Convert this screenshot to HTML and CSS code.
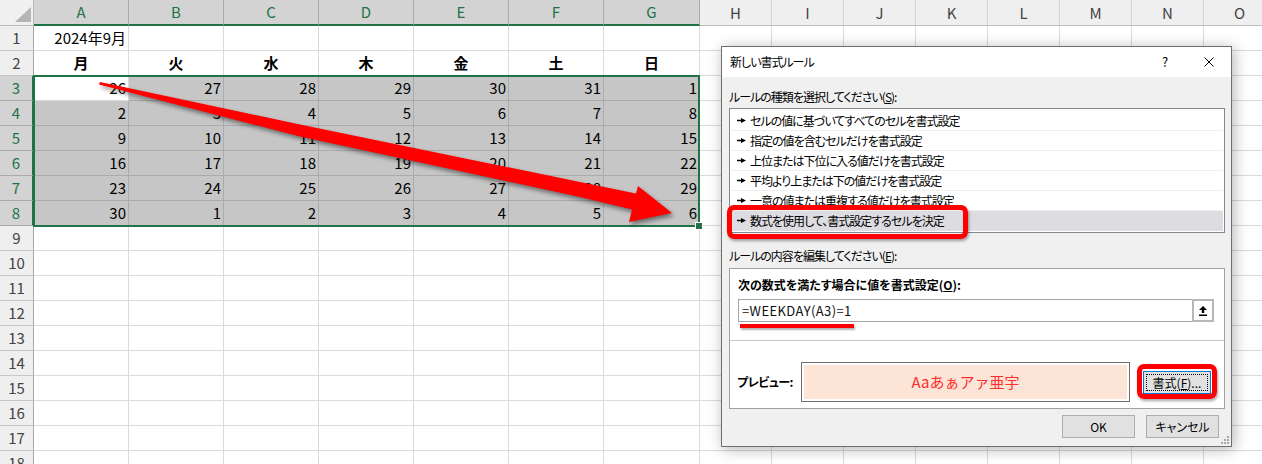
FILE: index.html
```html
<!DOCTYPE html>
<html lang="ja">
<head>
<meta charset="utf-8">
<title>新しい書式ルール</title>
<link rel="stylesheet" href="styles.css">
</head>
<body>
<div class="sheet">
  <div class="corner"><svg class="tri" viewBox="0 0 34 26"><polygon points="15,22 31,22 31,7" fill="#b5b5b5"/></svg></div>
  <div class="ch on">A</div><div class="ch on">B</div><div class="ch on">C</div><div class="ch on">D</div><div class="ch on">E</div><div class="ch on">F</div><div class="ch on">G</div>
  <div class="ch">H</div><div class="ch">I</div><div class="ch">J</div><div class="ch">K</div><div class="ch">L</div><div class="ch">M</div><div class="ch">N</div><div class="ch">O</div>

  <div class="rh">1</div><div class="v">2024年9月</div><i></i><i></i><i></i><i></i><i></i><i></i><i></i><i></i><i></i><i></i><i></i><i></i><i></i><i></i>

  <div class="rh">2</div><div class="d">月</div><div class="d">火</div><div class="d">水</div><div class="d">木</div><div class="d">金</div><div class="d">土</div><div class="d">日</div><i></i><i></i><i></i><i></i><i></i><i></i><i></i><i></i>

  <div class="rh on">3</div><div class="v">26</div><div class="v s">27</div><div class="v s">28</div><div class="v s">29</div><div class="v s">30</div><div class="v s">31</div><div class="v s">1</div><i></i><i></i><i></i><i></i><i></i><i></i><i></i><i></i>

  <div class="rh on">4</div><div class="v s">2</div><div class="v s">3</div><div class="v s">4</div><div class="v s">5</div><div class="v s">6</div><div class="v s">7</div><div class="v s">8</div><i></i><i></i><i></i><i></i><i></i><i></i><i></i><i></i>

  <div class="rh on">5</div><div class="v s">9</div><div class="v s">10</div><div class="v s">11</div><div class="v s">12</div><div class="v s">13</div><div class="v s">14</div><div class="v s">15</div><i></i><i></i><i></i><i></i><i></i><i></i><i></i><i></i>

  <div class="rh on">6</div><div class="v s">16</div><div class="v s">17</div><div class="v s">18</div><div class="v s">19</div><div class="v s">20</div><div class="v s">21</div><div class="v s">22</div><i></i><i></i><i></i><i></i><i></i><i></i><i></i><i></i>

  <div class="rh on">7</div><div class="v s">23</div><div class="v s">24</div><div class="v s">25</div><div class="v s">26</div><div class="v s">27</div><div class="v s">28</div><div class="v s">29</div><i></i><i></i><i></i><i></i><i></i><i></i><i></i><i></i>

  <div class="rh on">8</div><div class="v s">30</div><div class="v s">1</div><div class="v s">2</div><div class="v s">3</div><div class="v s">4</div><div class="v s">5</div><div class="v s">6</div><i></i><i></i><i></i><i></i><i></i><i></i><i></i><i></i>

  <div class="rh">9</div><i></i><i></i><i></i><i></i><i></i><i></i><i></i><i></i><i></i><i></i><i></i><i></i><i></i><i></i><i></i>
  <div class="rh">10</div><i></i><i></i><i></i><i></i><i></i><i></i><i></i><i></i><i></i><i></i><i></i><i></i><i></i><i></i><i></i>
  <div class="rh">11</div><i></i><i></i><i></i><i></i><i></i><i></i><i></i><i></i><i></i><i></i><i></i><i></i><i></i><i></i><i></i>
  <div class="rh">12</div><i></i><i></i><i></i><i></i><i></i><i></i><i></i><i></i><i></i><i></i><i></i><i></i><i></i><i></i><i></i>
  <div class="rh">13</div><i></i><i></i><i></i><i></i><i></i><i></i><i></i><i></i><i></i><i></i><i></i><i></i><i></i><i></i><i></i>
  <div class="rh">14</div><i></i><i></i><i></i><i></i><i></i><i></i><i></i><i></i><i></i><i></i><i></i><i></i><i></i><i></i><i></i>
  <div class="rh">15</div><i></i><i></i><i></i><i></i><i></i><i></i><i></i><i></i><i></i><i></i><i></i><i></i><i></i><i></i><i></i>
  <div class="rh">16</div><i></i><i></i><i></i><i></i><i></i><i></i><i></i><i></i><i></i><i></i><i></i><i></i><i></i><i></i><i></i>
  <div class="rh">17</div><i></i><i></i><i></i><i></i><i></i><i></i><i></i><i></i><i></i><i></i><i></i><i></i><i></i><i></i><i></i>
  <div class="rh">18</div><i></i><i></i><i></i><i></i><i></i><i></i><i></i><i></i><i></i><i></i><i></i><i></i><i></i><i></i><i></i>
</div>

<div class="selbox"></div>
<div class="handle"></div>

<svg class="arrow" viewBox="0 0 1262 464">
  <polygon class="arrow-shape" points="100,82 300,124.5 580,182 636,193.5 638,186 672,213 629,222 632,209.5 580,197 300,136.5 99,84.5"/>
</svg>

<div class="dialog">
  <div class="titlebar">
    <span class="title">新しい書式ルール</span>
    <span class="help">?</span>
    <svg class="close" viewBox="0 0 10 10"><path d="M0.5 0.5L9.5 9.5M9.5 0.5L0.5 9.5" stroke="#000" stroke-width="1" fill="none"/></svg>
  </div>
  <div class="dbody">
    <div class="label">ルールの種類を選択してください(<u>S</u>):</div>
    <ul class="list">
      <li><svg class="pt" viewBox="0 0 9 5"><path d="M0 1.8h5v1.4H0z M4 0L9 2.5 4 5z" fill="#000"/></svg><span>セルの値に基づいてすべてのセルを書式設定</span></li>
      <li><svg class="pt" viewBox="0 0 9 5"><path d="M0 1.8h5v1.4H0z M4 0L9 2.5 4 5z" fill="#000"/></svg><span>指定の値を含むセルだけを書式設定</span></li>
      <li><svg class="pt" viewBox="0 0 9 5"><path d="M0 1.8h5v1.4H0z M4 0L9 2.5 4 5z" fill="#000"/></svg><span>上位または下位に入る値だけを書式設定</span></li>
      <li><svg class="pt" viewBox="0 0 9 5"><path d="M0 1.8h5v1.4H0z M4 0L9 2.5 4 5z" fill="#000"/></svg><span>平均より上または下の値だけを書式設定</span></li>
      <li><svg class="pt" viewBox="0 0 9 5"><path d="M0 1.8h5v1.4H0z M4 0L9 2.5 4 5z" fill="#000"/></svg><span>一意の値または重複する値だけを書式設定</span></li>
      <li class="cur"><svg class="pt" viewBox="0 0 9 5"><path d="M0 1.8h5v1.4H0z M4 0L9 2.5 4 5z" fill="#000"/></svg><span>数式を使用して、書式設定するセルを決定</span></li>
    </ul>
    <div class="label l2">ルールの内容を編集してください(<u>E</u>):</div>
    <div class="panel">
      <div class="psec">
        <div class="blabel">次の数式を満たす場合に値を書式設定(<u>O</u>):</div>
        <div class="input">
          <span class="ftext">=WEEKDAY(A3)=1</span>
          <span class="refbtn"><svg class="refic" viewBox="0 0 8 10"><path d="M4 0L8 4H5.2V7H2.8V4H0Z M0 8.5H8V10H0Z" fill="#000"/></svg></span>
        </div>
      </div>
      <div class="prow">
        <span class="plabel">プレビュー:</span>
        <div class="preview"><div class="pinner">Aaあぁアァ亜宇</div></div>
        <button class="btn fmt"><span class="focus">書式(<u>F</u>)...</span></button>
      </div>
    </div>
    <div class="actions">
      <button class="btn">OK</button>
      <button class="btn">キャンセル</button>
    </div>
  </div>
  <svg class="grip" viewBox="0 0 10 10"><g fill="#a8a8a8"><rect x="8" y="2" width="2" height="2"/><rect x="8" y="5" width="2" height="2"/><rect x="5" y="5" width="2" height="2"/><rect x="8" y="8" width="2" height="2"/><rect x="5" y="8" width="2" height="2"/><rect x="2" y="8" width="2" height="2"/></g></svg>
  <div class="mark m1"></div>
  <div class="mark m2"></div>
  <div class="uline"></div>
</div>
</body>
</html>
```
FILE: styles.css
```css
* { box-sizing: border-box; margin: 0; padding: 0; }
html, body { width: 1262px; height: 464px; overflow: hidden; background: #fff; }
body {
  position: relative;
  font-family: "Noto Sans CJK JP", "Noto Sans", sans-serif;
  color: #000;
}

/* ---------- spreadsheet ---------- */
.sheet {
  display: grid;
  grid-template-columns: 34px repeat(6, 95px) 96px repeat(8, 72px);
  grid-template-rows: 26px repeat(18, 25px);
  width: 1262px;
  height: 464px;
  overflow: hidden;
  font-size: 15px;
  line-height: 24px;
}
.sheet > * {
  border-right: 1px solid #dadada;
  border-bottom: 1px solid #dadada;
  white-space: nowrap;
  overflow: hidden;
}
.sheet i { display: block; }

.corner {
  background: #f0f0f0;
  border-right-color: #bcbcbc !important;
  border-bottom-color: #bcbcbc !important;
}
.tri { display: block; width: 34px; height: 26px; }

.ch {
  background: #efefef;
  color: #444;
  text-align: center;
  line-height: 25px;
  border-right-color: #d4d4d4 !important;
  border-bottom-color: #bdbdbd !important;
}
.ch.on {
  background: #d3d3d3;
  color: #217346;
  line-height: 24px;
  border-right-color: #ababab !important;
  border-bottom: 2px solid #217346 !important;
}

.rh {
  background: #efefef;
  color: #444;
  text-align: center;
  border-right-color: #a6a6a6 !important;
  border-bottom-color: #c6c6c6 !important;
}
.rh.on {
  background: #d3d3d3;
  color: #217346;
  border-right: 2px solid #217346 !important;
  border-bottom-color: #ababab !important;
}

.v { text-align: right; padding-right: 2px; }
.d { text-align: center; font-weight: bold; }
.s {
  background: #c6c6c6;
  border-right-color: #ababab !important;
  border-bottom-color: #ababab !important;
}

.selbox {
  position: absolute;
  left: 33px;
  top: 75px;
  width: 667px;
  height: 152px;
  border: 2px solid #217346;
}
.handle {
  position: absolute;
  left: 695px;
  top: 222px;
  width: 8px;
  height: 8px;
  background: #217346;
  border: 1px solid #fff;
}

.arrow {
  position: absolute;
  left: 0;
  top: 0;
  width: 1262px;
  height: 464px;
  pointer-events: none;
}
.arrow-shape {
  fill: #ff0000;
  filter: drop-shadow(2px 3px 2px rgba(0, 0, 0, 0.45));
}

/* ---------- dialog ---------- */
.dialog {
  position: absolute;
  left: 721px;
  top: 46px;
  width: 511px;
  border: 1px solid #6f6f6f;
  background: #f0f0f0;
  box-shadow: 2px 2px 14px rgba(0, 0, 0, 0.3);
  font-size: 12px;
  line-height: 16px;
  font-feature-settings: "palt";
}
.titlebar {
  height: 30px;
  background: #fff;
  display: flex;
  align-items: center;
  padding-left: 8px;
}
.title { flex: 1; letter-spacing: -1px; }
.help {
  width: 14px;
  text-align: center;
  font-size: 13px;
  margin-right: 32px;
}
.close { width: 10px; height: 10px; margin-right: 17px; }

.dbody { padding: 12px 6px 8px 7px; }
.label { letter-spacing: -1px; }

.list {
  list-style: none;
  margin-top: 3px;
  border: 1px solid #828790;
  background: #fff;
  padding: 2px 1px 1px;
}
.list li {
  height: 20px;
  border-bottom: 1px solid #efefef;
  padding-left: 6px;
  display: flex;
  align-items: center;
  gap: 4px;
  letter-spacing: -1px;
}
.list li.cur { background: #dcdce1; border-bottom-color: #dcdce1; }
.pt { width: 9px; height: 5px; flex: none; }

.l2 { margin-top: 15px; }

.panel {
  margin-top: 4px;
  border: 1px solid #a0a0a0;
  background: #fff;
}
.psec { padding: 8px 10px 18px 8px; }
.blabel { font-weight: bold; }
.input {
  margin-top: 6px;
  height: 23px;
  border: 1px solid #a5a5a5;
  display: flex;
  align-items: center;
  padding-left: 3px;
}
.ftext {
  flex: 1;
  font-size: 13px;
  letter-spacing: 0.4px;
  color: #111;
  font-feature-settings: normal;
}
.refbtn {
  width: 22px;
  height: 23px;
  margin: -1px -1px -1px 0;
  border: 2px solid #b7b7b7;
  background: #fff;
  display: flex;
  align-items: center;
  justify-content: center;
}
.refic { width: 8px; height: 10px; }

.prow {
  border-top: 1px solid #c8c8c8;
  padding: 21px 13px 6px 7px;
  display: flex;
  align-items: center;
}
.plabel { width: 64px; font-weight: bold; letter-spacing: -0.5px; }
.preview {
  width: 329px;
  height: 40px;
  border: 1px solid #6e6e6e;
  padding: 2px;
  background: #fff;
}
.pinner {
  height: 100%;
  background: #fce4d6;
  color: #ff2d2d;
  font-size: 15px;
  font-feature-settings: normal;
  display: flex;
  align-items: center;
  justify-content: center;
}

.btn {
  font: inherit;
  color: #000;
  width: 73px;
  height: 23px;
  background: #e1e1e1;
  border: 1px solid #adadad;
}
.fmt {
  margin-left: 13px;
  width: 68px;
  border-color: #0078d7;
  padding: 2px;
}
.focus {
  display: block;
  height: 100%;
  border: 1px dotted #000;
  line-height: 15px;
}

.actions {
  margin-top: 6px;
  display: flex;
  justify-content: flex-end;
  gap: 11px;
  padding-right: 6px;
}

.grip {
  position: absolute;
  right: 2px;
  bottom: 2px;
  width: 10px;
  height: 10px;
}

/* ---------- annotations ---------- */
.mark {
  position: absolute;
  border: 5px solid #ff0000;
  border-radius: 7px;
  box-shadow: 1px 2px 3px rgba(0, 0, 0, 0.35);
}
.m1 { left: 5px; top: 158px; width: 241px; height: 34px; }
.m2 { left: 415px; top: 317px; width: 80px; height: 35px; }
.uline {
  position: absolute;
  left: 18px;
  top: 277px;
  width: 114px;
  height: 4px;
  background: #ff0000;
  box-shadow: 1px 2px 2px rgba(0, 0, 0, 0.3);
}
```
